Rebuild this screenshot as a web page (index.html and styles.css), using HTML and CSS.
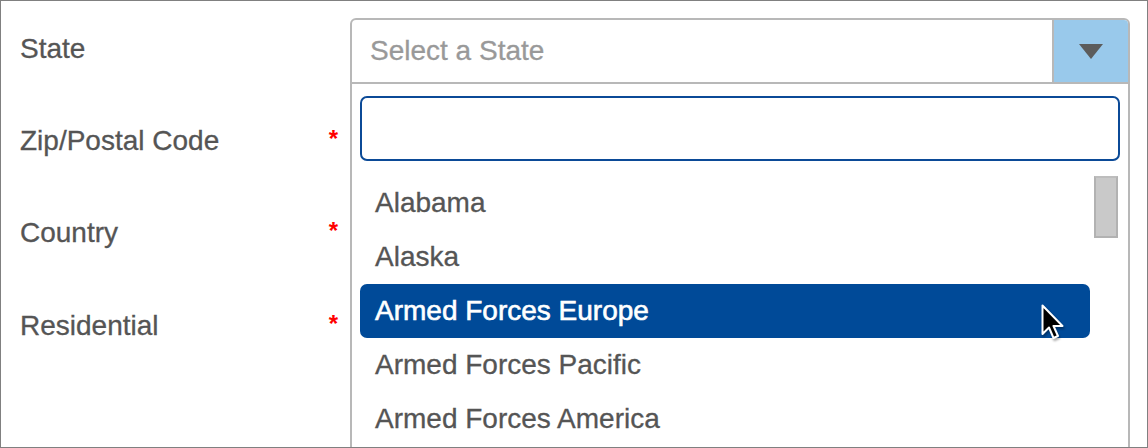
FILE: index.html
```html
<!DOCTYPE html>
<html lang="en">
<head>
<meta charset="utf-8">
<title>State select</title>
<link rel="stylesheet" href="styles.css">
</head>
<body>
<div class="frame">
  <div class="labels">
    <div class="label-row"><span class="label">State</span></div>
    <div class="label-row"><span class="label">Zip/Postal Code</span><span class="req">*</span></div>
    <div class="label-row"><span class="label">Country</span><span class="req">*</span></div>
    <div class="label-row"><span class="label">Residential</span><span class="req">*</span></div>
  </div>
  <div class="field">
    <div class="select">
      <span class="placeholder">Select a State</span>
      <span class="select-btn">
        <svg width="24" height="15" viewBox="0 0 24 15"><path d="M0 0 H24 L12 15 Z" fill="#5c5c5c"/></svg>
      </span>
    </div>
    <div class="dropdown">
      <div class="search"></div>
      <div class="list">
        <div class="options">
          <div class="option">Alabama</div>
          <div class="option">Alaska</div>
          <div class="option selected">Armed Forces Europe</div>
          <div class="option">Armed Forces Pacific</div>
          <div class="option">Armed Forces America</div>
        </div>
        <div class="scrolltrack"><div class="thumb"></div></div>
      </div>
    </div>
  </div>
  <svg class="cursor" width="26" height="38" viewBox="0 0 26 38">
    <path d="M1.5 1.5 L1.5 30 L8 23.5 L12.5 34 L17 32 L12.5 22 L21.5 22 Z" fill="#000" stroke="#fff" stroke-width="2" stroke-linejoin="round"/>
  </svg>
</div>
</body>
</html>
```
FILE: styles.css
```css
* { box-sizing: border-box; }
html, body { margin: 0; padding: 0; background: #fff; }
body { font-family: "Liberation Sans", Arial, Helvetica, sans-serif; }

.frame {
  position: relative;
  width: 1148px;
  height: 448px;
  border: 1px solid #808080;
  overflow: hidden;
  display: flex;
  background: #fff;
}

.labels {
  width: 349px;
  padding-top: 2px;
  display: flex;
  flex-direction: column;
}
.label-row {
  height: 92px;
  display: flex;
  justify-content: space-between;
  padding-left: 19px;
  padding-right: 12px;
}
.label-row:last-child { margin-top: 1px; }
.label {
  font-size: 28px;
  line-height: 92px;
  color: #555;
  -webkit-text-stroke: 0.3px #555;
}
.req {
  color: #f00;
  font-size: 24px;
  font-weight: bold;
  line-height: 92px;
  margin-top: -2px;
}

.field {
  position: relative;
  width: 780px;
  margin-top: 17px;
}

.select {
  display: flex;
  height: 66px;
  border: 2px solid #b8b8b8;
  border-radius: 6px 6px 0 0;
}
.placeholder {
  flex: 1;
  padding-left: 18px;
  font-size: 28px;
  line-height: 62px;
  color: #999;
  -webkit-text-stroke: 0.3px #999;
}
.select-btn {
  width: 76px;
  border-left: 2px solid #b8b8b8;
  background: #99c9eb;
  border-top-right-radius: 4px;
  display: flex;
  align-items: center;
  justify-content: center;
}

.dropdown {
  position: absolute;
  top: 66px;
  left: 0;
  width: 780px;
  height: 420px;
  border: 2px solid #b8b8b8;
  border-top: none;
  background: #fff;
  padding: 12px 8px 0 8px;
}
.search {
  height: 65px;
  border: 2px solid #0b4a97;
  border-radius: 7px;
}
.list {
  display: flex;
  gap: 4px;
  margin-top: 15px;
}
.options { width: 730px; }
.option {
  height: 54px;
  line-height: 54px;
  padding-left: 15px;
  font-size: 28px;
  color: #555;
  -webkit-text-stroke: 0.3px #555;
  border-radius: 7px;
}
.option.selected {
  background: #004a98;
  color: #fff;
  -webkit-text-stroke: 0.6px #fff;
}
.scrolltrack { width: 24px; }
.thumb {
  height: 62px;
  background: #c9c9c9;
  border: 2px solid #b2b2b2;
  border-top-color: #bdbdbd;
}

.cursor {
  position: absolute;
  left: 1040px;
  top: 303px;
  filter: drop-shadow(1px 2px 1px rgba(0,0,0,0.35));
}
```
